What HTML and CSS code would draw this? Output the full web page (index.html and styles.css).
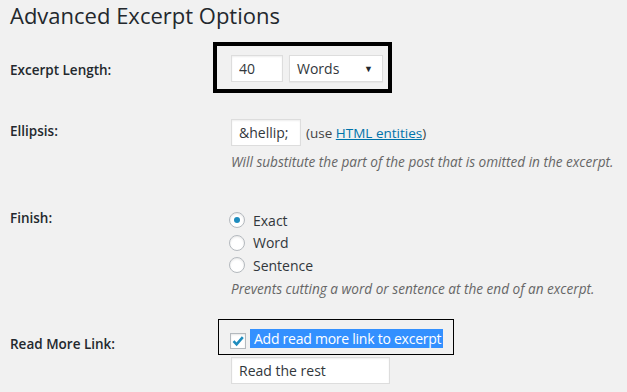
FILE: index.html
```html
<!DOCTYPE html>
<html lang="en">
  <head>
    <meta charset="UTF-8" />
    <meta name="viewport" content="width=device-width, initial-scale=1.0" />
    <title>Advanced Excerpt Options</title>
    <link rel="stylesheet" href="styles.css">
  </head>
  <body>
    <div class="wrap">
      <h1 class="title">Advanced Excerpt Options</h1>

      <div class="row row-length">
        <label class="label" for="length">Excerpt Length:</label>
        <div class="field">
          <div class="outline">
            <input id="length" class="text tiny" value="40" />
            <div class="select">
              <span>Words</span>
              <span class="arrow">&#9660;</span>
            </div>
          </div>
        </div>
      </div>

      <div class="row row-ellipsis">
        <label class="label" for="ellipsis">Ellipsis:</label>
        <div class="field">
          <div class="inline">
            <input id="ellipsis" class="text small" value="&amp;hellip;" />
            <span class="note">(use <a href="#">HTML entities</a>)</span>
          </div>
          <p class="desc">Will substitute the part of the post that is omitted in the excerpt.</p>
        </div>
      </div>

      <div class="row row-finish">
        <span class="label">Finish:</span>
        <div class="field">
          <label class="choice"><input type="radio" name="finish" checked /> Exact</label>
          <label class="choice"><input type="radio" name="finish" /> Word</label>
          <label class="choice"><input type="radio" name="finish" /> Sentence</label>
          <p class="desc">Prevents cutting a word or sentence at the end of an excerpt.</p>
        </div>
      </div>

      <div class="row row-more">
        <span class="label">Read More Link:</span>
        <div class="field">
          <div class="thin-outline">
            <span class="checkbox">
              <svg width="16" height="16" viewBox="0 0 16 16">
                <path d="M3.5 8.2 L6.6 11.4 L12.8 4.2" fill="none" stroke="#1e8cbe" stroke-width="2.6" />
              </svg>
            </span>
            <span class="picked">Add read more link to excerpt</span>
          </div>
          <input class="text medium" value="Read the rest" />
        </div>
      </div>
    </div>
  </body>
</html>
```

FILE: styles.css
```css
* {
  box-sizing: border-box;
}

body {
  margin: 0;
  background: #f1f1f1;
  color: #23282d;
  font-family: "Open Sans", "Noto Sans", sans-serif;
  font-size: 14px;
}

.wrap {
  padding-left: 10px;
}

.title {
  margin: 0;
  padding-top: 1px;
  font-size: 22px;
  font-weight: 400;
  line-height: 29px;
  color: #23282d;
}

.row {
  display: grid;
  grid-template-columns: 221px 1fr;
}

.label {
  font-weight: 600;
  font-size: 13.5px;
  line-height: 19px;
}

.field {
  display: flex;
  flex-direction: column;
  align-items: flex-start;
}

/* rows */
.row-length {
  margin-top: 12px;
}

.row-length .label {
  margin-top: 19px;
}

.outline {
  display: flex;
  gap: 6px;
  margin-left: -18px;
  padding: 9px 5px 7px 14px;
  border: 4px solid #000;
}

.row-ellipsis {
  margin-top: 26px;
}

.row-ellipsis .label {
  margin-top: 3px;
}

.row-finish {
  margin-top: 37px;
}

.row-finish .label {
  margin-top: 0;
}

.row-more {
  margin-top: 20px;
}

.row-more .label {
  margin-top: 16px;
}

/* controls */
.text {
  height: 27px;
  padding: 0 7px;
  border: 1px solid #ddd;
  background: #fff;
  box-shadow: inset 0 1px 2px rgba(0, 0, 0, 0.07);
  color: #32373c;
  font-family: inherit;
  font-size: 14px;
  outline: none;
}

.tiny {
  width: 52px;
}

.small {
  width: 70px;
}

.medium {
  width: 159px;
  margin-top: 2px;
}

.select {
  display: flex;
  align-items: center;
  justify-content: space-between;
  width: 94px;
  height: 27px;
  padding: 0 9px 0 7px;
  border: 1px solid #ddd;
  background: #fff;
  box-shadow: 0 1px 1px rgba(0, 0, 0, 0.04);
  color: #32373c;
}

.arrow {
  font-size: 9px;
  color: #23282d;
}

.inline {
  display: flex;
  align-items: center;
  gap: 5px;
}

.note {
  font-size: 13.5px;
  color: #444;
}

.note a {
  color: #0073aa;
}

.desc {
  margin: 6px 0 0;
  font-size: 13.6px;
  font-style: italic;
  line-height: 20px;
  color: #666;
}

.row-finish .desc {
  margin-top: 2px;
}

.choice {
  display: flex;
  align-items: center;
  gap: 8px;
  height: 22.5px;
  margin-left: -2px;
  color: #32373c;
}

.choice input {
  appearance: none;
  width: 16px;
  height: 16px;
  margin: 0;
  border: 1px solid #b4b9be;
  border-radius: 50%;
  background: #fff;
  box-shadow: inset 0 1px 2px rgba(0, 0, 0, 0.1);
  position: relative;
}

.choice input:checked::before {
  content: "";
  position: absolute;
  left: 4px;
  top: 4px;
  width: 6px;
  height: 6px;
  border-radius: 50%;
  background: #1e8cbe;
}

.thin-outline {
  display: flex;
  align-items: center;
  gap: 4px;
  margin-left: -13px;
  padding: 9px 10px 5px 11px;
  border: 1px solid #000;
}

.checkbox {
  display: flex;
  width: 16px;
  height: 16px;
  margin-top: 4px;
  border: 1px solid #b4b9be;
  background: #fff;
  box-shadow: inset 0 1px 2px rgba(0, 0, 0, 0.1);
  align-items: center;
  justify-content: center;
}

.checkbox svg {
  flex: none;
}

.picked {
  padding: 0 2px 0 4px;
  background: #3390ff;
  color: #fff;
  font-size: 14px;
  letter-spacing: -0.25px;
  line-height: 19px;
}
```
